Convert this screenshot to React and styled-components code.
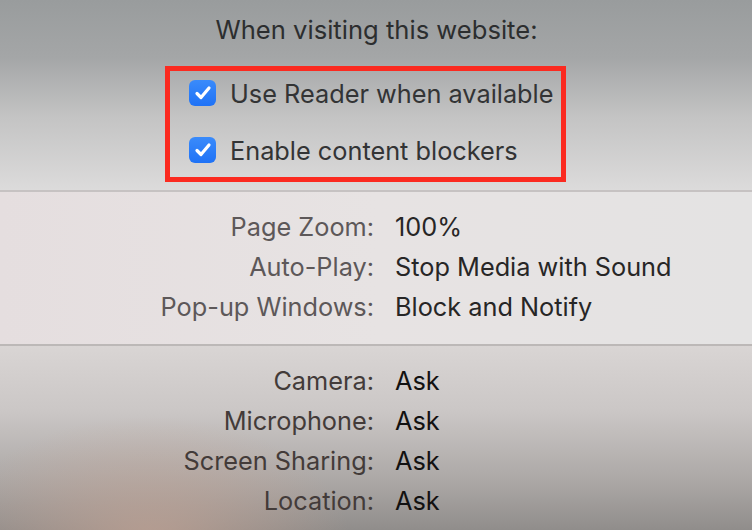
import React from "react";
import styled, { createGlobalStyle } from "styled-components";

const Global = createGlobalStyle`
  html, body { margin: 0; padding: 0; }
  body {
    width: 752px;
    height: 530px;
    overflow: hidden;
    font-family: Inter, "Noto Sans", "Liberation Sans", sans-serif;
    -webkit-font-smoothing: antialiased;
  }
`;

const Page = styled.div`
  width: 752px;
  height: 530px;
  display: flex;
  flex-direction: column;
`;

const TopSection = styled.section`
  height: 190px;
  box-sizing: border-box;
  padding-top: 12px;
  background: linear-gradient(180deg, #999c9d 0%, #a4a6a7 30%, #c4c4c4 62%, #dcdbdb 100%);
  display: flex;
  flex-direction: column;
`;

const Title = styled.div`
  text-align: center;
  font-size: 25.6px;
  line-height: 36px;
  color: #2c2e2f;
  padding-left: 1px;
`;

const Highlight = styled.div`
  margin-top: 18px;
  margin-left: 165px;
  width: 401px;
  height: 116px;
  box-sizing: border-box;
  border: 5px solid #fb2a20;
  padding-left: 19px;
  display: flex;
  flex-direction: column;
  gap: 13px;
`;

const CheckRow = styled.label`
  height: 44px;
  display: flex;
  align-items: center;
  gap: 14px;
  font-size: 25.3px;
  color: #333435;
`;

const Box = styled.span`
  width: 27px;
  height: 26px;
  border-radius: 6px;
  background: linear-gradient(180deg, #3a8bfb 0%, #1f72f6 100%);
  display: flex;
  align-items: center;
  justify-content: center;
  flex: none;
`;

const Separator = styled.div`
  height: 2px;
  background: ${(p) => p.color};
  flex: none;
`;

const MiddleSection = styled.section`
  height: 152px;
  box-sizing: border-box;
  padding-top: 14px;
  background: linear-gradient(90deg, #e5dedf 0%, #e7e3e3 50%, #e4e3e3 100%);
`;

const BottomSection = styled.section`
  flex: 1;
  box-sizing: border-box;
  padding-top: 14px;
  background:
    radial-gradient(ellipse 200px 125px at 150px 195px, rgba(198, 164, 148, 0.7) 0%, rgba(198, 164, 148, 0) 100%),
    linear-gradient(180deg, #d9d5d4 0%, #cbc7c6 35%, #aaa6a4 75%, #908d8b 100%);
`;

const Grid = styled.div`
  display: grid;
  grid-template-columns: 374px 1fr;
  column-gap: 21px;
  grid-auto-rows: 40px;
  align-items: center;
  font-size: 25.3px;
`;

const Label = styled.div`
  text-align: right;
  color: ${(p) => p.color};
  white-space: nowrap;
`;

const Value = styled.div`
  color: ${(p) => p.color};
  white-space: nowrap;
`;

function Check() {
  return (
    <Box>
      <svg width="18" height="16" viewBox="0 0 18 16">
        <path
          d="M3 8.5 L7 12.5 L15 3"
          fill="none"
          stroke="#fff"
          strokeWidth="3.2"
          strokeLinecap="round"
          strokeLinejoin="round"
        />
      </svg>
    </Box>
  );
}

const settings = [
  ["Page Zoom:", "100%"],
  ["Auto-Play:", "Stop Media with Sound"],
  ["Pop-up Windows:", "Block and Notify"],
];

const permissions = [
  ["Camera:", "Ask"],
  ["Microphone:", "Ask"],
  ["Screen Sharing:", "Ask"],
  ["Location:", "Ask"],
];

export default function App() {
  return (
    <Page>
      <Global />
      <TopSection>
        <Title>When visiting this website:</Title>
        <Highlight>
          <CheckRow>
            <Check />
            Use Reader when available
          </CheckRow>
          <CheckRow>
            <Check />
            Enable content blockers
          </CheckRow>
        </Highlight>
      </TopSection>
      <Separator color="#c6c2c2" />
      <MiddleSection>
        <Grid>
          {settings.map(([l, v]) => (
            <React.Fragment key={l}>
              <Label color="#5d5859">{l}</Label>
              <Value color="#272626">{v}</Value>
            </React.Fragment>
          ))}
        </Grid>
      </MiddleSection>
      <Separator color="#bcb8b7" />
      <BottomSection>
        <Grid>
          {permissions.map(([l, v]) => (
            <React.Fragment key={l}>
              <Label color="#433b39">{l}</Label>
              <Value color="#121111">{v}</Value>
            </React.Fragment>
          ))}
        </Grid>
      </BottomSection>
    </Page>
  );
}
